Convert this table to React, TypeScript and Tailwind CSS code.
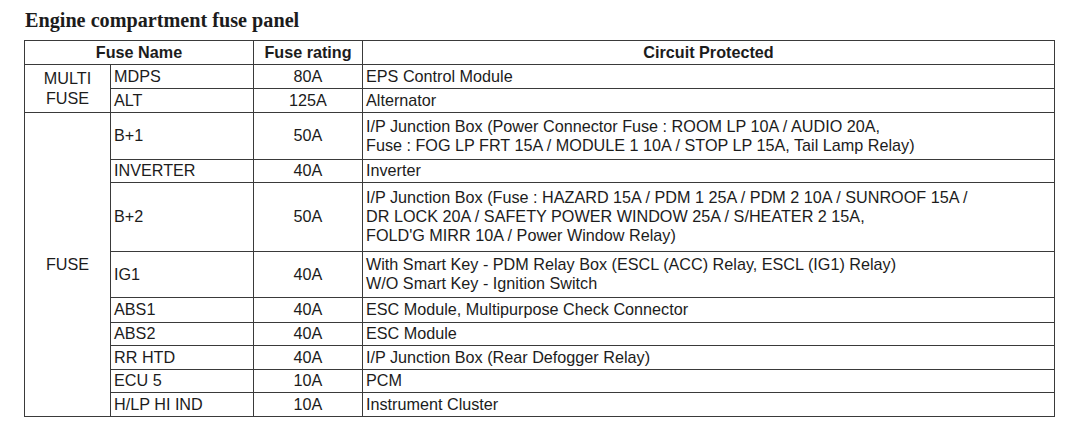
const rows = [
  { name: "B+1", rating: "50A", h: "h-[47px]", circuit: ["I/P Junction Box (Power Connector Fuse : ROOM LP 10A / AUDIO 20A,", "Fuse : FOG LP FRT 15A / MODULE 1 10A / STOP LP 15A, Tail Lamp Relay)"] },
  { name: "INVERTER", rating: "40A", h: "h-[23px]", circuit: ["Inverter"] },
  {
    name: "B+2",
    rating: "50A",
    h: "h-[69px]",
    circuit: [
      "I/P Junction Box (Fuse : HAZARD 15A / PDM 1 25A / PDM 2 10A / SUNROOF 15A /",
      "DR LOCK 20A / SAFETY POWER WINDOW 25A / S/HEATER 2 15A,",
      "FOLD'G MIRR 10A / Power Window Relay)",
    ],
  },
  { name: "IG1", rating: "40A", h: "h-[46px]", circuit: ["With Smart Key - PDM Relay Box (ESCL (ACC) Relay, ESCL (IG1) Relay)", "W/O Smart Key - Ignition Switch"] },
  { name: "ABS1", rating: "40A", h: "h-[25px]", circuit: ["ESC Module, Multipurpose Check Connector"] },
  { name: "ABS2", rating: "40A", h: "h-[23px]", circuit: ["ESC Module"] },
  { name: "RR HTD", rating: "40A", h: "h-[24px]", circuit: ["I/P Junction Box (Rear Defogger Relay)"] },
  { name: "ECU 5", rating: "10A", h: "h-[23px]", circuit: ["PCM"] },
  { name: "H/LP HI IND", rating: "10A", h: "h-[24px]", circuit: ["Instrument Cluster"] },
];

const cell = "border border-[#3a3a3a] leading-[19px] p-0 pb-[1px]";

export default function App() {
  return (
    <div className="w-[1086px] h-[434px] bg-white text-[#1c1c1c] font-['Liberation_Sans',Arial,sans-serif] text-[16.2px]">
      <div className="pt-[8px] pl-[25px] h-[40px] font-['Liberation_Serif','Times_New_Roman',serif] font-bold text-[20.2px] leading-[24px]">
        Engine compartment fuse panel
      </div>
      <table className="ml-[24px] w-[1031px] border-collapse table-fixed">
        <colgroup>
          <col className="w-[86px]" />
          <col className="w-[143px]" />
          <col className="w-[109px]" />
          <col />
        </colgroup>
        <tbody>
          <tr className="h-[24px]">
            <th colSpan={2} className={`${cell} text-center font-bold`}>Fuse Name</th>
            <th className={`${cell} text-center font-bold`}>Fuse rating</th>
            <th className={`${cell} text-center font-bold`}>Circuit Protected</th>
          </tr>
          <tr className="h-[24px]">
            <td rowSpan={2} className={`${cell} text-center align-middle leading-[20px]`}>
              MULTI
              <br />
              FUSE
            </td>
            <td className={`${cell} pl-[3px]`}>MDPS</td>
            <td className={`${cell} text-center`}>80A</td>
            <td className={`${cell} pl-[3px]`}>EPS Control Module</td>
          </tr>
          <tr className="h-[24px]">
            <td className={`${cell} pl-[3px]`}>ALT</td>
            <td className={`${cell} text-center`}>125A</td>
            <td className={`${cell} pl-[3px]`}>Alternator</td>
          </tr>
          {rows.map((r, i) => (
            <tr key={r.name} className={r.h}>
              {i === 0 && (
                <td rowSpan={rows.length} className={`${cell} text-center align-middle`}>
                  FUSE
                </td>
              )}
              <td className={`${cell} pl-[3px]`}>{r.name}</td>
              <td className={`${cell} text-center`}>{r.rating}</td>
              <td className={`${cell} pl-[3px]`}>
                {r.circuit.map((line) => (
                  <div key={line}>{line}</div>
                ))}
              </td>
            </tr>
          ))}
        </tbody>
      </table>
    </div>
  );
}
